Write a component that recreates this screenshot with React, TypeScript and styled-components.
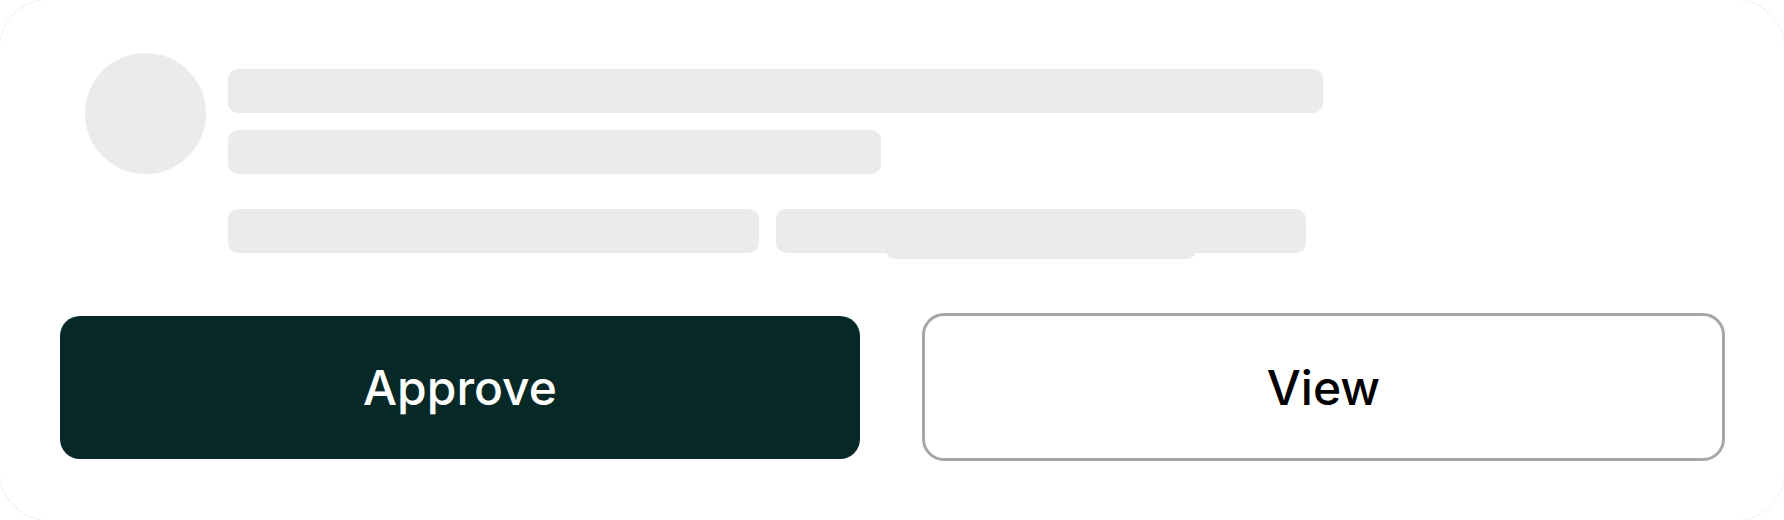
import styled, { createGlobalStyle } from "styled-components";

const GlobalStyle = createGlobalStyle`
  html, body {
    margin: 0;
    padding: 0;
    background: #ffffff;
    overflow: hidden;
  }
  * {
    box-sizing: border-box;
  }
`;

// card is a hair bigger than the window, so only its rounded corners show the outline
const Card = styled.div`
  width: 1786px;
  height: 522px;
  margin: -1px;
  border-radius: 50px;
  border: 1px dotted #e2e2e2;
  background: #ffffff;
  padding: 53px 59px 0 60px;
  display: flex;
  flex-direction: column;
  font-family: Inter, "Noto Sans", sans-serif;
`;

const Header = styled.div`
  display: flex;
  gap: 22px;
  padding-left: 25px;
`;

const Avatar = styled.div`
  width: 121px;
  height: 121px;
  border-radius: 50%;
  background: #ebebeb;
  flex-shrink: 0;
`;

const Lines = styled.div`
  display: flex;
  flex-direction: column;
  padding-top: 16px;
`;

const Line = styled.div<{ $w: number; $top?: number }>`
  position: relative;
  width: ${(p) => p.$w}px;
  height: 44px;
  margin-top: ${(p) => p.$top ?? 0}px;
  border-radius: 10px;
  background: #ebebeb;
`;

const MetaRow = styled.div`
  display: flex;
  gap: 17px;
  margin-top: 35px;
`;

// the skeleton peeking out from behind the second meta bar
const Stacked = styled.div`
  position: absolute;
  left: 110px;
  right: 110px;
  bottom: -6px;
  height: 24px;
  border-radius: 9px;
  background: #ebebeb;
`;

const Actions = styled.div`
  display: grid;
  grid-template-columns: 800px 803px;
  gap: 62px;
  align-items: center;
  margin-top: 60px;
`;

const Button = styled.button<{ $primary?: boolean }>`
  height: ${(p) => (p.$primary ? 143 : 148)}px;
  border-radius: ${(p) => (p.$primary ? 20 : 22)}px;
  border: ${(p) => (p.$primary ? "none" : "3px solid #a6a6a6")};
  background: ${(p) => (p.$primary ? "#062927" : "#ffffff")};
  color: ${(p) => (p.$primary ? "#ffffff" : "#000000")};
  font-family: Inter, "Noto Sans", sans-serif;
  font-size: 48px;
  font-weight: 500;
  display: flex;
  align-items: center;
  justify-content: center;
  padding: 0;
  cursor: pointer;
`;

export default function App() {
  return (
    <>
      <GlobalStyle />
      <Card>
        <Header>
          <Avatar />
          <Lines>
            <Line $w={1095} />
            <Line $w={653} $top={17} />
            <MetaRow>
              <Line $w={531} />
              <Line $w={530}>
                <Stacked />
              </Line>
            </MetaRow>
          </Lines>
        </Header>
        <Actions>
          <Button $primary>Approve</Button>
          <Button>View</Button>
        </Actions>
      </Card>
    </>
  );
}
